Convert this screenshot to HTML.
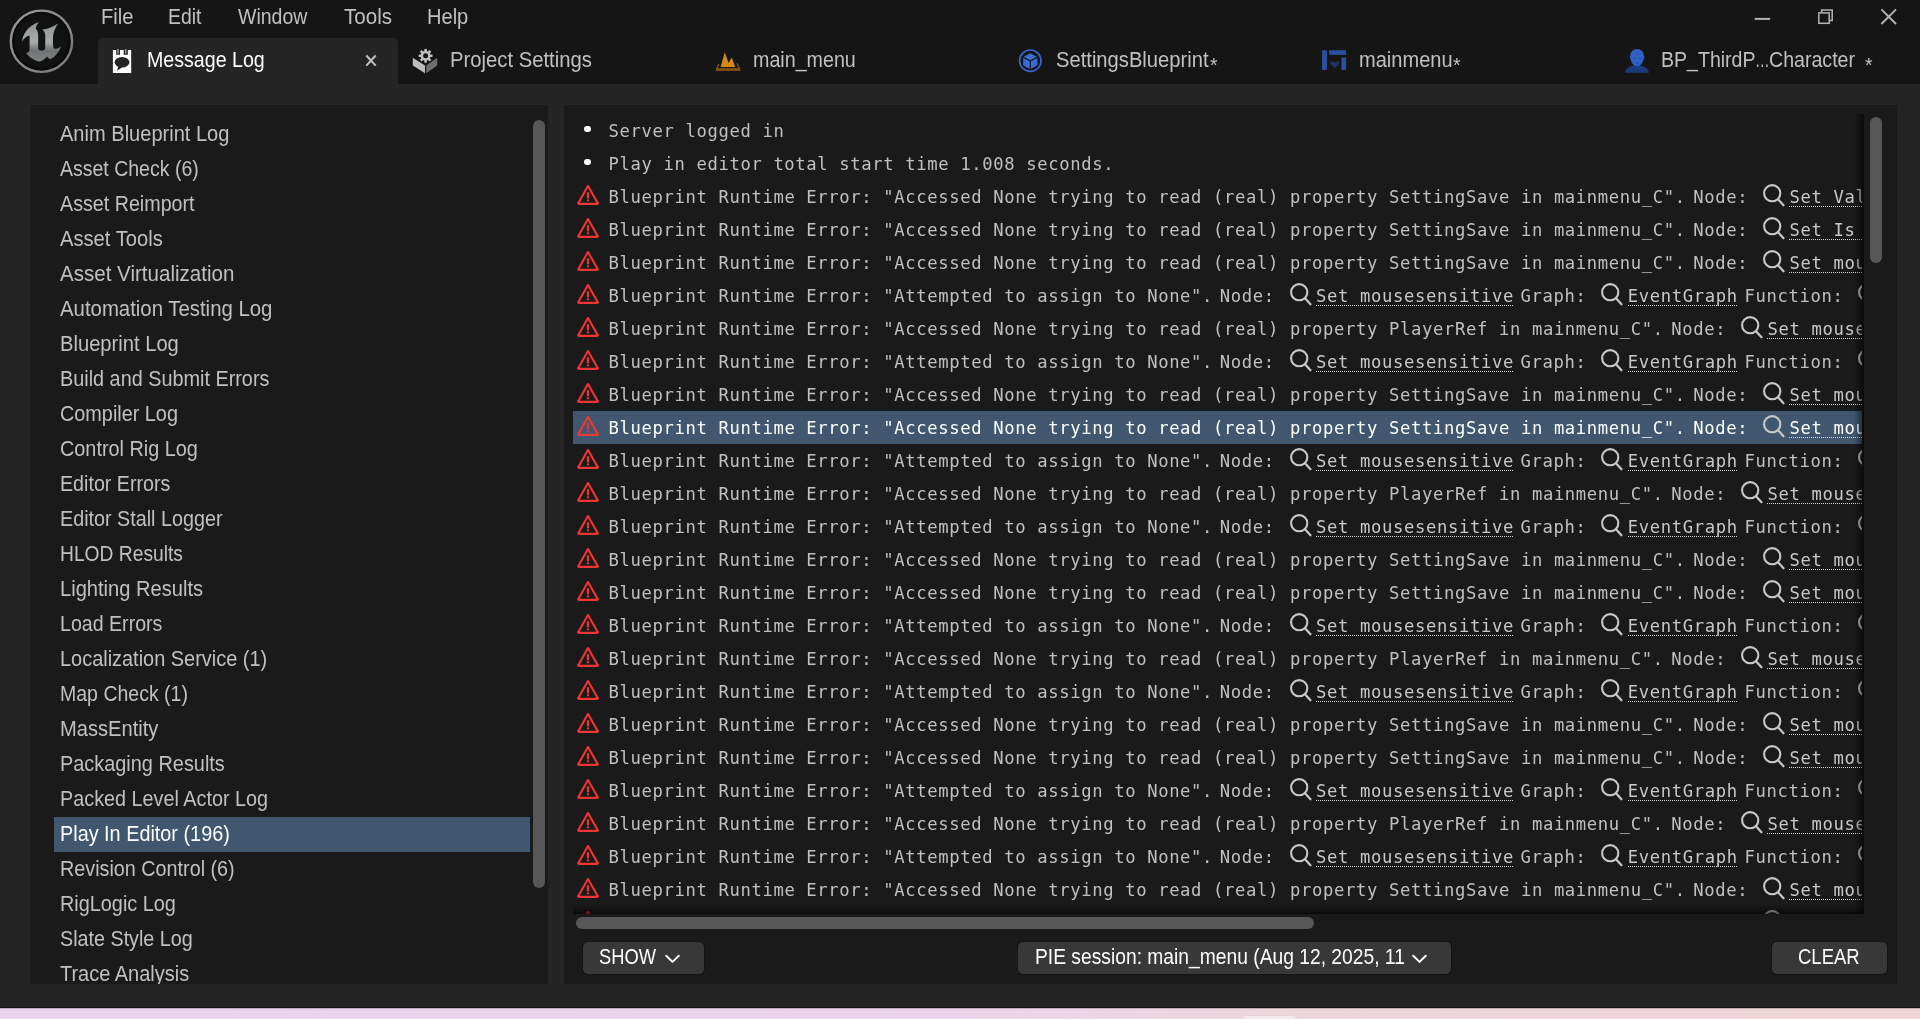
<!DOCTYPE html>
<html lang="en"><head><meta charset="utf-8"><title>Message Log</title>
<style>
*{box-sizing:border-box;margin:0;padding:0}
html,body{width:1920px;height:1019px;overflow:hidden;background:#242424}
body{font-family:"Liberation Sans",sans-serif;font-size:22px;color:#c0c0c0;position:relative}
#win{will-change:transform;position:absolute;left:0;top:0;width:1920px;height:1008px;background:#242424;overflow:hidden}
#tb{position:absolute;left:0;top:0;width:1920px;height:84px;background:#151515}
#tb .m{position:absolute;top:0;height:34px;line-height:34px;white-space:nowrap}
#tab{position:absolute;left:98px;top:38px;width:300px;height:46px;background:#242424;border-radius:5px 5px 0 0}
.tt{position:absolute;top:38px;height:46px;line-height:44px;white-space:nowrap}
.st{top:42.5px;font-size:19.5px}
#tb svg{position:absolute}
#left{position:absolute;left:30px;top:105px;width:518px;height:879px;background:#1a1a1a;overflow:hidden}
.li{position:absolute;left:24px;width:476px;height:35px;line-height:34px;padding-left:6.4px;white-space:nowrap}
.li.sel{background:#40576f;color:#fff}
.thumb{position:absolute;background:#575757;border-radius:6px}
#right{position:absolute;left:564px;top:105px;width:1333px;height:879px;background:#1a1a1a;overflow:hidden}
#view{position:absolute;left:9px;top:9px;width:1291px;height:800px;overflow:hidden}
#clip{position:absolute;left:0;top:0;width:1289px;height:800px;overflow:hidden}
.row{position:absolute;left:0;width:3000px;height:33px;white-space:nowrap;display:flex;align-items:flex-start;
 font-family:"DejaVu Sans Mono","Liberation Mono",monospace;font-size:17.2px;letter-spacing:0.645px;line-height:33px;color:#c0c0c0}
.row.sel{background:#40576f;color:#fff}
.row .warn{flex:none;margin:4px 0 0 2.5px}
.row .dot{flex:none;width:6.8px;height:6.8px;border-radius:50%;background:#fff;margin:11.5px 0 0 11.4px}
.row .warn + .t{margin-left:9px}
.row .dot + .t{margin-left:17.3px}
.row .t{flex:none;position:relative;top:1px}
.row .g{margin-left:6.7px}
.row.a .g{margin-left:7.4px}
.row .mag{flex:none;margin:3.4px 3.4px 0 13.9px}
.row .lk{flex:none;position:relative;top:1px;color:#c8c8c8;
 background:repeating-linear-gradient(90deg,#d8d8d8 0,#d8d8d8 1px,transparent 1px,transparent 2px) 0 25px/100% 1.4px no-repeat}
.row.sel .lk{color:#fff}
.shr{position:absolute;right:0;top:0;width:10px;height:800px;background:linear-gradient(90deg,rgba(0,0,0,0),rgba(0,0,0,.28) 50%,rgba(0,0,0,.6))}
.shb{position:absolute;left:0;bottom:0;width:1291px;height:10px;background:linear-gradient(180deg,rgba(0,0,0,0),rgba(0,0,0,.28) 50%,rgba(0,0,0,.6))}
.btn{position:absolute;top:837px;height:32px;background:#383838;border-radius:5px;box-shadow:0 0 0 1px #141414;color:#fff;line-height:30px;white-space:nowrap}
.btn span{display:inline-block}
.chev{position:absolute;top:12px}
#strip{position:absolute;left:0;top:1008px;width:1920px;height:11px;background:linear-gradient(90deg,#e9d3ee 0%,#ecd5ea 50%,#eed6dd 66%,#f0d4d8 100%)}
#strip b{position:absolute;left:0;top:0;width:1920px;height:1px;background:rgba(70,60,70,.28)}
#winb{position:absolute;left:0;top:1007px;width:1920px;height:1px;background:#121212}
#strip i{position:absolute;left:1241px;top:7px;width:56px;height:8px;border-radius:4px 4px 0 0;background:#f6eaee;border:1px solid #e7d1d8}

</style></head>
<body>
<div id="win">
<div id="tb">
<svg style="left:0;top:0" width="100" height="90" viewBox="0 0 1132 1019">
<defs>
<linearGradient id="lgU" x1="0" y1="250" x2="0" y2="700" gradientUnits="userSpaceOnUse"><stop offset="0" stop-color="#8f9393"/><stop offset=".5" stop-color="#a9acac"/><stop offset=".72" stop-color="#6f7373"/><stop offset="1" stop-color="#7f8383"/></linearGradient>
<linearGradient id="lgR" x1="150" y1="120" x2="780" y2="820" gradientUnits="userSpaceOnUse"><stop offset="0" stop-color="#9a9a9a"/><stop offset=".5" stop-color="#8a8a8a"/><stop offset="1" stop-color="#767a7a"/></linearGradient>
<radialGradient id="rgI" cx="469" cy="467" r="340" gradientUnits="userSpaceOnUse"><stop offset="0" stop-color="#141414"/><stop offset=".85" stop-color="#111"/><stop offset="1" stop-color="#060606"/></radialGradient>
</defs>
<circle cx="469" cy="467" r="347" fill="url(#rgI)" stroke="url(#lgR)" stroke-width="27"/>
<path fill="url(#lgU)" d="M440 252 C400 260 340 295 300 345 C270 385 252 430 250 470 C268 438 295 410 335 402 L335 562 C335 585 318 598 295 600 C335 655 395 690 452 697 C485 690 510 665 530 640 L565 672 C615 650 670 590 692 520 C668 548 640 560 607 545 C598 500 596 420 606 378 C618 330 640 292 660 270 C610 292 555 330 478 335 C503 355 512 375 512 405 L512 555 C495 578 452 580 432 558 L432 400 C432 365 425 340 405 325 C408 300 420 272 440 252 Z"/>
</svg>
<div class="m" style="left:101px"><span style="display:inline-block;transform-origin:0 50%;transform:scaleX(0.9174);">File</span></div>
<div class="m" style="left:168px"><span style="display:inline-block;transform-origin:0 50%;transform:scaleX(0.8816);">Edit</span></div>
<div class="m" style="left:238px"><span style="display:inline-block;transform-origin:0 50%;transform:scaleX(0.8873);">Window</span></div>
<div class="m" style="left:344px"><span style="display:inline-block;transform-origin:0 50%;transform:scaleX(0.9348);">Tools</span></div>
<div class="m" style="left:427px"><span style="display:inline-block;transform-origin:0 50%;transform:scaleX(0.9117);">Help</span></div>
<!-- window controls -->
<svg style="left:1750px;top:5px" width="150" height="26" viewBox="0 0 150 26" fill="none" stroke="#b4b4b4">
<path d="M4.7 13.9 H20.1" stroke-width="2"/>
<path d="M71.6 7.1 V4.9 H82.2 V15.6 H79.8" stroke-width="1.5"/>
<rect x="68.8" y="7.9" width="10.4" height="10.4" stroke-width="1.5"/>
<path d="M131.4 4.4 L146 19 M146 4.4 L131.4 19" stroke-width="1.9"/>
</svg>
<!-- active tab -->
<div id="tab"></div>
<svg style="left:112px;top:49px" width="20" height="25" viewBox="0 0 20 25">
<path fill="#fff" d="M0.9 0.9 H4.2 V5.7 H8 V0.9 H11.7 V5.7 H15.8 V0.9 H19.2 V24 H0.9 Z"/>
<rect x="5.3" y="0" width="1.5" height="4.7" fill="#9c9c9c"/><rect x="12.9" y="0" width="1.5" height="4.7" fill="#9c9c9c"/>
<ellipse cx="10" cy="13.2" rx="7.4" ry="5.25" fill="#242424"/>
<path fill="#242424" d="M6.4 17.2 L5 21.8 L10.6 18 Z"/>
</svg>
<div class="tt" style="left:147px;color:#fff"><span style="display:inline-block;transform-origin:0 50%;transform:scaleX(0.8912);">Message Log</span></div>
<svg style="left:364px;top:53px" width="14" height="15" viewBox="0 0 14 15"><path d="M2.3 2.5 L11.7 12.6 M11.7 2.5 L2.3 12.6" stroke="#c0c0c0" stroke-width="2.1" fill="none"/></svg>
<!-- project settings -->
<svg style="left:411px;top:47px" width="28" height="28" viewBox="0 0 28 28">
<path fill="#bdbdbd" d="M1.8 10.8 L14 18.6 V26.2 L1.8 18.6 Z"/>
<path fill="#6f6f6f" d="M15.2 18.6 L26.2 10.8 V18.6 L15.2 26.2 Z"/>
<g fill="#c0c0c0"><circle cx="14.6" cy="8.8" r="4.9"/>
<rect x="13.35" y="1.9" width="2.5" height="13.8"/>
<rect x="13.35" y="1.9" width="2.5" height="13.8" transform="rotate(45 14.6 8.8)"/>
<rect x="13.35" y="1.9" width="2.5" height="13.8" transform="rotate(90 14.6 8.8)"/>
<rect x="13.35" y="1.9" width="2.5" height="13.8" transform="rotate(135 14.6 8.8)"/></g>
<circle cx="14.6" cy="8.8" r="2.5" fill="#151515"/>
</svg>
<div class="tt" style="left:450px"><span style="display:inline-block;transform-origin:0 50%;transform:scaleX(0.9207);">Project Settings</span></div>
<!-- main_menu -->
<svg style="left:714px;top:50px" width="28" height="24" viewBox="0 0 28 24">
<path fill="#7c4e0f" d="M1.9 21.1 H26.3 V18.6 L23.4 13 L22.3 13.6 L24.4 18 H3.8 L5.6 14.2 L4.5 13.6 L1.9 18.6 Z"/>
<path fill="#d58a14" d="M6.6 16.9 L10.8 2.3 L14.6 13 L17.7 7.5 L21.2 16.9 Z"/>
</svg>
<div class="tt" style="left:753px"><span style="display:inline-block;transform-origin:0 50%;transform:scaleX(0.8941);">main_menu</span></div>
<!-- SettingsBlueprint -->
<svg style="left:1017px;top:48px" width="27" height="26" viewBox="0 0 27 26">
<circle cx="13.3" cy="12.7" r="10.7" fill="none" stroke="#3866cd" stroke-width="1.7"/>
<path fill="#3b6bd8" d="M13.3 5.2 L19.9 8.7 L13.3 12.2 L6.7 8.7 Z"/>
<path fill="#3b6bd8" d="M6.2 9.9 L12.7 13.3 V21 L6.2 17.3 Z"/>
<path fill="#3b6bd8" d="M20.4 9.9 L13.9 13.3 V21 L20.4 17.3 Z"/>
</svg>
<div class="tt" style="left:1056px"><span style="display:inline-block;transform-origin:0 50%;transform:scaleX(0.9171);">SettingsBlueprint</span></div>
<div class="tt st" style="left:1210px">*</div>
<!-- mainmenu widget -->
<svg style="left:1320px;top:48px" width="28" height="24" viewBox="0 0 28 24">
<rect x="2" y="2.2" width="4.9" height="19.7" fill="#2a4f9e"/>
<rect x="9.2" y="2.2" width="16.9" height="4.7" fill="#2a4f9e"/>
<rect x="21.4" y="9.5" width="4.7" height="12.4" fill="#2a4f9e"/>
<path fill="#1c3362" d="M14.8 20.3 L10.6 16.3 C9.4 14.9 10.6 13 12.3 13.2 C13.4 13.3 14.3 14 14.8 15 C15.3 14 16.2 13.3 17.3 13.2 C19 13 20.2 14.9 19 16.3 Z"/>
</svg>
<div class="tt" style="left:1359px"><span style="display:inline-block;transform-origin:0 50%;transform:scaleX(0.9116);">mainmenu</span></div>
<div class="tt st" style="left:1453px">*</div>
<!-- BP character -->
<svg style="left:1623px;top:47px" width="28" height="27" viewBox="0 0 28 27">
<path fill="#1d3a7c" d="M2.1 25.8 C3 21.5 6 19.6 9.8 18.8 L18.2 18.8 C22 19.6 25 21.5 26 25.8 Z"/>
<path fill="#2f60c6" d="M14.1 1.9 C18.2 1.9 20.9 5 20.9 9 C21.6 9.3 21.6 11.6 20.5 12.2 C20 15.6 17.6 19.3 14.1 19.3 C10.6 19.3 8.2 15.6 7.7 12.2 C6.6 11.6 6.6 9.3 7.3 9 C7.3 5 10 1.9 14.1 1.9 Z"/>
<path d="M10.4 11.2 H12.6 M15.6 11.2 H17.8 M12.8 15.8 H15.4" stroke="#234a9c" stroke-width="0.9" fill="none"/>
</svg>
<div class="tt" style="left:1661.4px"><span style="display:inline-block;transform-origin:0 50%;transform:scaleX(0.8885);">BP_ThirdP</span></div><div class="tt" style="left:1755.3px"><span style="display:inline-block;transform-origin:0 50%;transform:scaleX(0.6625);">…</span></div><div class="tt" style="left:1768.9px"><span style="display:inline-block;transform-origin:0 50%;transform:scaleX(0.8903);">Character</span></div>
<div class="tt st" style="left:1865px">*</div>
</div>

<div id="left">
<div class="li" style="top:12px"><span style="display:inline-block;transform-origin:0 50%;transform:scaleX(0.9114);">Anim Blueprint Log</span></div>
<div class="li" style="top:47px"><span style="display:inline-block;transform-origin:0 50%;transform:scaleX(0.8864);">Asset Check (6)</span></div>
<div class="li" style="top:82px"><span style="display:inline-block;transform-origin:0 50%;transform:scaleX(0.8947);">Asset Reimport</span></div>
<div class="li" style="top:117px"><span style="display:inline-block;transform-origin:0 50%;transform:scaleX(0.9165);">Asset Tools</span></div>
<div class="li" style="top:152px"><span style="display:inline-block;transform-origin:0 50%;transform:scaleX(0.9342);">Asset Virtualization</span></div>
<div class="li" style="top:187px"><span style="display:inline-block;transform-origin:0 50%;transform:scaleX(0.9254);">Automation Testing Log</span></div>
<div class="li" style="top:222px"><span style="display:inline-block;transform-origin:0 50%;transform:scaleX(0.9166);">Blueprint Log</span></div>
<div class="li" style="top:257px"><span style="display:inline-block;transform-origin:0 50%;transform:scaleX(0.9014);">Build and Submit Errors</span></div>
<div class="li" style="top:292px"><span style="display:inline-block;transform-origin:0 50%;transform:scaleX(0.9013);">Compiler Log</span></div>
<div class="li" style="top:327px"><span style="display:inline-block;transform-origin:0 50%;transform:scaleX(0.9015);">Control Rig Log</span></div>
<div class="li" style="top:362px"><span style="display:inline-block;transform-origin:0 50%;transform:scaleX(0.8937);">Editor Errors</span></div>
<div class="li" style="top:397px"><span style="display:inline-block;transform-origin:0 50%;transform:scaleX(0.8977);">Editor Stall Logger</span></div>
<div class="li" style="top:432px"><span style="display:inline-block;transform-origin:0 50%;transform:scaleX(0.8748);">HLOD Results</span></div>
<div class="li" style="top:467px"><span style="display:inline-block;transform-origin:0 50%;transform:scaleX(0.9142);">Lighting Results</span></div>
<div class="li" style="top:502px"><span style="display:inline-block;transform-origin:0 50%;transform:scaleX(0.8908);">Load Errors</span></div>
<div class="li" style="top:537px"><span style="display:inline-block;transform-origin:0 50%;transform:scaleX(0.9057);">Localization Service (1)</span></div>
<div class="li" style="top:572px"><span style="display:inline-block;transform-origin:0 50%;transform:scaleX(0.8870);">Map Check (1)</span></div>
<div class="li" style="top:607px"><span style="display:inline-block;transform-origin:0 50%;transform:scaleX(0.9142);">MassEntity</span></div>
<div class="li" style="top:642px"><span style="display:inline-block;transform-origin:0 50%;transform:scaleX(0.9045);">Packaging Results</span></div>
<div class="li" style="top:677px"><span style="display:inline-block;transform-origin:0 50%;transform:scaleX(0.9004);">Packed Level Actor Log</span></div>
<div class="li sel" style="top:712px"><span style="display:inline-block;transform-origin:0 50%;transform:scaleX(0.9017);">Play In Editor (196)</span></div>
<div class="li" style="top:747px"><span style="display:inline-block;transform-origin:0 50%;transform:scaleX(0.8986);">Revision Control (6)</span></div>
<div class="li" style="top:782px"><span style="display:inline-block;transform-origin:0 50%;transform:scaleX(0.9020);">RigLogic Log</span></div>
<div class="li" style="top:817px"><span style="display:inline-block;transform-origin:0 50%;transform:scaleX(0.8971);">Slate Style Log</span></div>
<div class="li" style="top:852px"><span style="display:inline-block;transform-origin:0 50%;transform:scaleX(0.9078);">Trace Analysis</span></div>
<div class="thumb" style="left:503px;top:15px;width:12px;height:768px"></div>
</div>
<div id="right">
<div id="view">
<div id="clip">
<div style="top:0px" class="row"><i class="dot"></i><span class="t">Server logged in</span></div>
<div style="top:33px" class="row"><i class="dot"></i><span class="t">Play in editor total start time 1.008 seconds.</span></div>
<div style="top:66px" class="row a"><svg class="warn" width="24" height="22" viewBox="0 0 24 22"><path d="M11 3.84 Q12 0.4 13 3.84 L21.2 18.16 Q23 19.9 20.2 19.9 L3.8 19.9 Q1 19.9 2.8 18.16 Z" fill="none" stroke="#ef3535" stroke-width="2.1" stroke-linejoin="round"/><path d="M12 8.2 V14.4" stroke="#ef3535" stroke-width="2.2" fill="none"/><rect x="10.9" y="15.3" width="2.2" height="1.9" fill="#ef3535"/></svg><span class="t">Blueprint Runtime Error: &quot;Accessed None trying to read (real) property SettingSave in mainmenu_C&quot;.</span><span class="t g">Node:</span><svg class="mag" width="24" height="26" viewBox="0 0 24 26"><circle cx="10.2" cy="10.2" r="8.1" fill="none" stroke="#c8c8c8" stroke-width="2.1"/><path d="M16 16.2 L21.5 22.3" stroke="#c8c8c8" stroke-width="2.2" stroke-linecap="round" fill="none"/></svg><span class="lk">Set Value</span></div>
<div style="top:99px" class="row a"><svg class="warn" width="24" height="22" viewBox="0 0 24 22"><path d="M11 3.84 Q12 0.4 13 3.84 L21.2 18.16 Q23 19.9 20.2 19.9 L3.8 19.9 Q1 19.9 2.8 18.16 Z" fill="none" stroke="#ef3535" stroke-width="2.1" stroke-linejoin="round"/><path d="M12 8.2 V14.4" stroke="#ef3535" stroke-width="2.2" fill="none"/><rect x="10.9" y="15.3" width="2.2" height="1.9" fill="#ef3535"/></svg><span class="t">Blueprint Runtime Error: &quot;Accessed None trying to read (real) property SettingSave in mainmenu_C&quot;.</span><span class="t g">Node:</span><svg class="mag" width="24" height="26" viewBox="0 0 24 26"><circle cx="10.2" cy="10.2" r="8.1" fill="none" stroke="#c8c8c8" stroke-width="2.1"/><path d="M16 16.2 L21.5 22.3" stroke="#c8c8c8" stroke-width="2.2" stroke-linecap="round" fill="none"/></svg><span class="lk">Set Is Checked</span></div>
<div style="top:132px" class="row a"><svg class="warn" width="24" height="22" viewBox="0 0 24 22"><path d="M11 3.84 Q12 0.4 13 3.84 L21.2 18.16 Q23 19.9 20.2 19.9 L3.8 19.9 Q1 19.9 2.8 18.16 Z" fill="none" stroke="#ef3535" stroke-width="2.1" stroke-linejoin="round"/><path d="M12 8.2 V14.4" stroke="#ef3535" stroke-width="2.2" fill="none"/><rect x="10.9" y="15.3" width="2.2" height="1.9" fill="#ef3535"/></svg><span class="t">Blueprint Runtime Error: &quot;Accessed None trying to read (real) property SettingSave in mainmenu_C&quot;.</span><span class="t g">Node:</span><svg class="mag" width="24" height="26" viewBox="0 0 24 26"><circle cx="10.2" cy="10.2" r="8.1" fill="none" stroke="#c8c8c8" stroke-width="2.1"/><path d="M16 16.2 L21.5 22.3" stroke="#c8c8c8" stroke-width="2.2" stroke-linecap="round" fill="none"/></svg><span class="lk">Set mousesensitive</span></div>
<div style="top:165px" class="row"><svg class="warn" width="24" height="22" viewBox="0 0 24 22"><path d="M11 3.84 Q12 0.4 13 3.84 L21.2 18.16 Q23 19.9 20.2 19.9 L3.8 19.9 Q1 19.9 2.8 18.16 Z" fill="none" stroke="#ef3535" stroke-width="2.1" stroke-linejoin="round"/><path d="M12 8.2 V14.4" stroke="#ef3535" stroke-width="2.2" fill="none"/><rect x="10.9" y="15.3" width="2.2" height="1.9" fill="#ef3535"/></svg><span class="t">Blueprint Runtime Error: &quot;Attempted to assign to None&quot;.</span><span class="t g">Node:</span><svg class="mag" width="24" height="26" viewBox="0 0 24 26"><circle cx="10.2" cy="10.2" r="8.1" fill="none" stroke="#c8c8c8" stroke-width="2.1"/><path d="M16 16.2 L21.5 22.3" stroke="#c8c8c8" stroke-width="2.2" stroke-linecap="round" fill="none"/></svg><span class="lk">Set mousesensitive</span><span class="t g">Graph:</span><svg class="mag" width="24" height="26" viewBox="0 0 24 26"><circle cx="10.2" cy="10.2" r="8.1" fill="none" stroke="#c8c8c8" stroke-width="2.1"/><path d="M16 16.2 L21.5 22.3" stroke="#c8c8c8" stroke-width="2.2" stroke-linecap="round" fill="none"/></svg><span class="lk">EventGraph</span><span class="t g">Function:</span><svg class="mag" width="24" height="26" viewBox="0 0 24 26"><circle cx="10.2" cy="10.2" r="8.1" fill="none" stroke="#c8c8c8" stroke-width="2.1"/><path d="M16 16.2 L21.5 22.3" stroke="#c8c8c8" stroke-width="2.2" stroke-linecap="round" fill="none"/></svg><span class="lk">Execute Ubergraph mainmenu</span></div>
<div style="top:198px" class="row a"><svg class="warn" width="24" height="22" viewBox="0 0 24 22"><path d="M11 3.84 Q12 0.4 13 3.84 L21.2 18.16 Q23 19.9 20.2 19.9 L3.8 19.9 Q1 19.9 2.8 18.16 Z" fill="none" stroke="#ef3535" stroke-width="2.1" stroke-linejoin="round"/><path d="M12 8.2 V14.4" stroke="#ef3535" stroke-width="2.2" fill="none"/><rect x="10.9" y="15.3" width="2.2" height="1.9" fill="#ef3535"/></svg><span class="t">Blueprint Runtime Error: &quot;Accessed None trying to read (real) property PlayerRef in mainmenu_C&quot;.</span><span class="t g">Node:</span><svg class="mag" width="24" height="26" viewBox="0 0 24 26"><circle cx="10.2" cy="10.2" r="8.1" fill="none" stroke="#c8c8c8" stroke-width="2.1"/><path d="M16 16.2 L21.5 22.3" stroke="#c8c8c8" stroke-width="2.2" stroke-linecap="round" fill="none"/></svg><span class="lk">Set mousesensitive</span></div>
<div style="top:231px" class="row"><svg class="warn" width="24" height="22" viewBox="0 0 24 22"><path d="M11 3.84 Q12 0.4 13 3.84 L21.2 18.16 Q23 19.9 20.2 19.9 L3.8 19.9 Q1 19.9 2.8 18.16 Z" fill="none" stroke="#ef3535" stroke-width="2.1" stroke-linejoin="round"/><path d="M12 8.2 V14.4" stroke="#ef3535" stroke-width="2.2" fill="none"/><rect x="10.9" y="15.3" width="2.2" height="1.9" fill="#ef3535"/></svg><span class="t">Blueprint Runtime Error: &quot;Attempted to assign to None&quot;.</span><span class="t g">Node:</span><svg class="mag" width="24" height="26" viewBox="0 0 24 26"><circle cx="10.2" cy="10.2" r="8.1" fill="none" stroke="#c8c8c8" stroke-width="2.1"/><path d="M16 16.2 L21.5 22.3" stroke="#c8c8c8" stroke-width="2.2" stroke-linecap="round" fill="none"/></svg><span class="lk">Set mousesensitive</span><span class="t g">Graph:</span><svg class="mag" width="24" height="26" viewBox="0 0 24 26"><circle cx="10.2" cy="10.2" r="8.1" fill="none" stroke="#c8c8c8" stroke-width="2.1"/><path d="M16 16.2 L21.5 22.3" stroke="#c8c8c8" stroke-width="2.2" stroke-linecap="round" fill="none"/></svg><span class="lk">EventGraph</span><span class="t g">Function:</span><svg class="mag" width="24" height="26" viewBox="0 0 24 26"><circle cx="10.2" cy="10.2" r="8.1" fill="none" stroke="#c8c8c8" stroke-width="2.1"/><path d="M16 16.2 L21.5 22.3" stroke="#c8c8c8" stroke-width="2.2" stroke-linecap="round" fill="none"/></svg><span class="lk">Execute Ubergraph mainmenu</span></div>
<div style="top:264px" class="row a"><svg class="warn" width="24" height="22" viewBox="0 0 24 22"><path d="M11 3.84 Q12 0.4 13 3.84 L21.2 18.16 Q23 19.9 20.2 19.9 L3.8 19.9 Q1 19.9 2.8 18.16 Z" fill="none" stroke="#ef3535" stroke-width="2.1" stroke-linejoin="round"/><path d="M12 8.2 V14.4" stroke="#ef3535" stroke-width="2.2" fill="none"/><rect x="10.9" y="15.3" width="2.2" height="1.9" fill="#ef3535"/></svg><span class="t">Blueprint Runtime Error: &quot;Accessed None trying to read (real) property SettingSave in mainmenu_C&quot;.</span><span class="t g">Node:</span><svg class="mag" width="24" height="26" viewBox="0 0 24 26"><circle cx="10.2" cy="10.2" r="8.1" fill="none" stroke="#c8c8c8" stroke-width="2.1"/><path d="M16 16.2 L21.5 22.3" stroke="#c8c8c8" stroke-width="2.2" stroke-linecap="round" fill="none"/></svg><span class="lk">Set mousesensitive</span></div>
<div style="top:297px" class="row a sel"><svg class="warn" width="24" height="22" viewBox="0 0 24 22"><path d="M11 3.84 Q12 0.4 13 3.84 L21.2 18.16 Q23 19.9 20.2 19.9 L3.8 19.9 Q1 19.9 2.8 18.16 Z" fill="none" stroke="#ef3535" stroke-width="2.1" stroke-linejoin="round"/><path d="M12 8.2 V14.4" stroke="#ef3535" stroke-width="2.2" fill="none"/><rect x="10.9" y="15.3" width="2.2" height="1.9" fill="#ef3535"/></svg><span class="t">Blueprint Runtime Error: &quot;Accessed None trying to read (real) property SettingSave in mainmenu_C&quot;.</span><span class="t g">Node:</span><svg class="mag" width="24" height="26" viewBox="0 0 24 26"><circle cx="10.2" cy="10.2" r="8.1" fill="none" stroke="#c8c8c8" stroke-width="2.1"/><path d="M16 16.2 L21.5 22.3" stroke="#c8c8c8" stroke-width="2.2" stroke-linecap="round" fill="none"/></svg><span class="lk">Set mousesensitive</span></div>
<div style="top:330px" class="row"><svg class="warn" width="24" height="22" viewBox="0 0 24 22"><path d="M11 3.84 Q12 0.4 13 3.84 L21.2 18.16 Q23 19.9 20.2 19.9 L3.8 19.9 Q1 19.9 2.8 18.16 Z" fill="none" stroke="#ef3535" stroke-width="2.1" stroke-linejoin="round"/><path d="M12 8.2 V14.4" stroke="#ef3535" stroke-width="2.2" fill="none"/><rect x="10.9" y="15.3" width="2.2" height="1.9" fill="#ef3535"/></svg><span class="t">Blueprint Runtime Error: &quot;Attempted to assign to None&quot;.</span><span class="t g">Node:</span><svg class="mag" width="24" height="26" viewBox="0 0 24 26"><circle cx="10.2" cy="10.2" r="8.1" fill="none" stroke="#c8c8c8" stroke-width="2.1"/><path d="M16 16.2 L21.5 22.3" stroke="#c8c8c8" stroke-width="2.2" stroke-linecap="round" fill="none"/></svg><span class="lk">Set mousesensitive</span><span class="t g">Graph:</span><svg class="mag" width="24" height="26" viewBox="0 0 24 26"><circle cx="10.2" cy="10.2" r="8.1" fill="none" stroke="#c8c8c8" stroke-width="2.1"/><path d="M16 16.2 L21.5 22.3" stroke="#c8c8c8" stroke-width="2.2" stroke-linecap="round" fill="none"/></svg><span class="lk">EventGraph</span><span class="t g">Function:</span><svg class="mag" width="24" height="26" viewBox="0 0 24 26"><circle cx="10.2" cy="10.2" r="8.1" fill="none" stroke="#c8c8c8" stroke-width="2.1"/><path d="M16 16.2 L21.5 22.3" stroke="#c8c8c8" stroke-width="2.2" stroke-linecap="round" fill="none"/></svg><span class="lk">Execute Ubergraph mainmenu</span></div>
<div style="top:363px" class="row a"><svg class="warn" width="24" height="22" viewBox="0 0 24 22"><path d="M11 3.84 Q12 0.4 13 3.84 L21.2 18.16 Q23 19.9 20.2 19.9 L3.8 19.9 Q1 19.9 2.8 18.16 Z" fill="none" stroke="#ef3535" stroke-width="2.1" stroke-linejoin="round"/><path d="M12 8.2 V14.4" stroke="#ef3535" stroke-width="2.2" fill="none"/><rect x="10.9" y="15.3" width="2.2" height="1.9" fill="#ef3535"/></svg><span class="t">Blueprint Runtime Error: &quot;Accessed None trying to read (real) property PlayerRef in mainmenu_C&quot;.</span><span class="t g">Node:</span><svg class="mag" width="24" height="26" viewBox="0 0 24 26"><circle cx="10.2" cy="10.2" r="8.1" fill="none" stroke="#c8c8c8" stroke-width="2.1"/><path d="M16 16.2 L21.5 22.3" stroke="#c8c8c8" stroke-width="2.2" stroke-linecap="round" fill="none"/></svg><span class="lk">Set mousesensitive</span></div>
<div style="top:396px" class="row"><svg class="warn" width="24" height="22" viewBox="0 0 24 22"><path d="M11 3.84 Q12 0.4 13 3.84 L21.2 18.16 Q23 19.9 20.2 19.9 L3.8 19.9 Q1 19.9 2.8 18.16 Z" fill="none" stroke="#ef3535" stroke-width="2.1" stroke-linejoin="round"/><path d="M12 8.2 V14.4" stroke="#ef3535" stroke-width="2.2" fill="none"/><rect x="10.9" y="15.3" width="2.2" height="1.9" fill="#ef3535"/></svg><span class="t">Blueprint Runtime Error: &quot;Attempted to assign to None&quot;.</span><span class="t g">Node:</span><svg class="mag" width="24" height="26" viewBox="0 0 24 26"><circle cx="10.2" cy="10.2" r="8.1" fill="none" stroke="#c8c8c8" stroke-width="2.1"/><path d="M16 16.2 L21.5 22.3" stroke="#c8c8c8" stroke-width="2.2" stroke-linecap="round" fill="none"/></svg><span class="lk">Set mousesensitive</span><span class="t g">Graph:</span><svg class="mag" width="24" height="26" viewBox="0 0 24 26"><circle cx="10.2" cy="10.2" r="8.1" fill="none" stroke="#c8c8c8" stroke-width="2.1"/><path d="M16 16.2 L21.5 22.3" stroke="#c8c8c8" stroke-width="2.2" stroke-linecap="round" fill="none"/></svg><span class="lk">EventGraph</span><span class="t g">Function:</span><svg class="mag" width="24" height="26" viewBox="0 0 24 26"><circle cx="10.2" cy="10.2" r="8.1" fill="none" stroke="#c8c8c8" stroke-width="2.1"/><path d="M16 16.2 L21.5 22.3" stroke="#c8c8c8" stroke-width="2.2" stroke-linecap="round" fill="none"/></svg><span class="lk">Execute Ubergraph mainmenu</span></div>
<div style="top:429px" class="row a"><svg class="warn" width="24" height="22" viewBox="0 0 24 22"><path d="M11 3.84 Q12 0.4 13 3.84 L21.2 18.16 Q23 19.9 20.2 19.9 L3.8 19.9 Q1 19.9 2.8 18.16 Z" fill="none" stroke="#ef3535" stroke-width="2.1" stroke-linejoin="round"/><path d="M12 8.2 V14.4" stroke="#ef3535" stroke-width="2.2" fill="none"/><rect x="10.9" y="15.3" width="2.2" height="1.9" fill="#ef3535"/></svg><span class="t">Blueprint Runtime Error: &quot;Accessed None trying to read (real) property SettingSave in mainmenu_C&quot;.</span><span class="t g">Node:</span><svg class="mag" width="24" height="26" viewBox="0 0 24 26"><circle cx="10.2" cy="10.2" r="8.1" fill="none" stroke="#c8c8c8" stroke-width="2.1"/><path d="M16 16.2 L21.5 22.3" stroke="#c8c8c8" stroke-width="2.2" stroke-linecap="round" fill="none"/></svg><span class="lk">Set mousesensitive</span></div>
<div style="top:462px" class="row a"><svg class="warn" width="24" height="22" viewBox="0 0 24 22"><path d="M11 3.84 Q12 0.4 13 3.84 L21.2 18.16 Q23 19.9 20.2 19.9 L3.8 19.9 Q1 19.9 2.8 18.16 Z" fill="none" stroke="#ef3535" stroke-width="2.1" stroke-linejoin="round"/><path d="M12 8.2 V14.4" stroke="#ef3535" stroke-width="2.2" fill="none"/><rect x="10.9" y="15.3" width="2.2" height="1.9" fill="#ef3535"/></svg><span class="t">Blueprint Runtime Error: &quot;Accessed None trying to read (real) property SettingSave in mainmenu_C&quot;.</span><span class="t g">Node:</span><svg class="mag" width="24" height="26" viewBox="0 0 24 26"><circle cx="10.2" cy="10.2" r="8.1" fill="none" stroke="#c8c8c8" stroke-width="2.1"/><path d="M16 16.2 L21.5 22.3" stroke="#c8c8c8" stroke-width="2.2" stroke-linecap="round" fill="none"/></svg><span class="lk">Set mousesensitive</span></div>
<div style="top:495px" class="row"><svg class="warn" width="24" height="22" viewBox="0 0 24 22"><path d="M11 3.84 Q12 0.4 13 3.84 L21.2 18.16 Q23 19.9 20.2 19.9 L3.8 19.9 Q1 19.9 2.8 18.16 Z" fill="none" stroke="#ef3535" stroke-width="2.1" stroke-linejoin="round"/><path d="M12 8.2 V14.4" stroke="#ef3535" stroke-width="2.2" fill="none"/><rect x="10.9" y="15.3" width="2.2" height="1.9" fill="#ef3535"/></svg><span class="t">Blueprint Runtime Error: &quot;Attempted to assign to None&quot;.</span><span class="t g">Node:</span><svg class="mag" width="24" height="26" viewBox="0 0 24 26"><circle cx="10.2" cy="10.2" r="8.1" fill="none" stroke="#c8c8c8" stroke-width="2.1"/><path d="M16 16.2 L21.5 22.3" stroke="#c8c8c8" stroke-width="2.2" stroke-linecap="round" fill="none"/></svg><span class="lk">Set mousesensitive</span><span class="t g">Graph:</span><svg class="mag" width="24" height="26" viewBox="0 0 24 26"><circle cx="10.2" cy="10.2" r="8.1" fill="none" stroke="#c8c8c8" stroke-width="2.1"/><path d="M16 16.2 L21.5 22.3" stroke="#c8c8c8" stroke-width="2.2" stroke-linecap="round" fill="none"/></svg><span class="lk">EventGraph</span><span class="t g">Function:</span><svg class="mag" width="24" height="26" viewBox="0 0 24 26"><circle cx="10.2" cy="10.2" r="8.1" fill="none" stroke="#c8c8c8" stroke-width="2.1"/><path d="M16 16.2 L21.5 22.3" stroke="#c8c8c8" stroke-width="2.2" stroke-linecap="round" fill="none"/></svg><span class="lk">Execute Ubergraph mainmenu</span></div>
<div style="top:528px" class="row a"><svg class="warn" width="24" height="22" viewBox="0 0 24 22"><path d="M11 3.84 Q12 0.4 13 3.84 L21.2 18.16 Q23 19.9 20.2 19.9 L3.8 19.9 Q1 19.9 2.8 18.16 Z" fill="none" stroke="#ef3535" stroke-width="2.1" stroke-linejoin="round"/><path d="M12 8.2 V14.4" stroke="#ef3535" stroke-width="2.2" fill="none"/><rect x="10.9" y="15.3" width="2.2" height="1.9" fill="#ef3535"/></svg><span class="t">Blueprint Runtime Error: &quot;Accessed None trying to read (real) property PlayerRef in mainmenu_C&quot;.</span><span class="t g">Node:</span><svg class="mag" width="24" height="26" viewBox="0 0 24 26"><circle cx="10.2" cy="10.2" r="8.1" fill="none" stroke="#c8c8c8" stroke-width="2.1"/><path d="M16 16.2 L21.5 22.3" stroke="#c8c8c8" stroke-width="2.2" stroke-linecap="round" fill="none"/></svg><span class="lk">Set mousesensitive</span></div>
<div style="top:561px" class="row"><svg class="warn" width="24" height="22" viewBox="0 0 24 22"><path d="M11 3.84 Q12 0.4 13 3.84 L21.2 18.16 Q23 19.9 20.2 19.9 L3.8 19.9 Q1 19.9 2.8 18.16 Z" fill="none" stroke="#ef3535" stroke-width="2.1" stroke-linejoin="round"/><path d="M12 8.2 V14.4" stroke="#ef3535" stroke-width="2.2" fill="none"/><rect x="10.9" y="15.3" width="2.2" height="1.9" fill="#ef3535"/></svg><span class="t">Blueprint Runtime Error: &quot;Attempted to assign to None&quot;.</span><span class="t g">Node:</span><svg class="mag" width="24" height="26" viewBox="0 0 24 26"><circle cx="10.2" cy="10.2" r="8.1" fill="none" stroke="#c8c8c8" stroke-width="2.1"/><path d="M16 16.2 L21.5 22.3" stroke="#c8c8c8" stroke-width="2.2" stroke-linecap="round" fill="none"/></svg><span class="lk">Set mousesensitive</span><span class="t g">Graph:</span><svg class="mag" width="24" height="26" viewBox="0 0 24 26"><circle cx="10.2" cy="10.2" r="8.1" fill="none" stroke="#c8c8c8" stroke-width="2.1"/><path d="M16 16.2 L21.5 22.3" stroke="#c8c8c8" stroke-width="2.2" stroke-linecap="round" fill="none"/></svg><span class="lk">EventGraph</span><span class="t g">Function:</span><svg class="mag" width="24" height="26" viewBox="0 0 24 26"><circle cx="10.2" cy="10.2" r="8.1" fill="none" stroke="#c8c8c8" stroke-width="2.1"/><path d="M16 16.2 L21.5 22.3" stroke="#c8c8c8" stroke-width="2.2" stroke-linecap="round" fill="none"/></svg><span class="lk">Execute Ubergraph mainmenu</span></div>
<div style="top:594px" class="row a"><svg class="warn" width="24" height="22" viewBox="0 0 24 22"><path d="M11 3.84 Q12 0.4 13 3.84 L21.2 18.16 Q23 19.9 20.2 19.9 L3.8 19.9 Q1 19.9 2.8 18.16 Z" fill="none" stroke="#ef3535" stroke-width="2.1" stroke-linejoin="round"/><path d="M12 8.2 V14.4" stroke="#ef3535" stroke-width="2.2" fill="none"/><rect x="10.9" y="15.3" width="2.2" height="1.9" fill="#ef3535"/></svg><span class="t">Blueprint Runtime Error: &quot;Accessed None trying to read (real) property SettingSave in mainmenu_C&quot;.</span><span class="t g">Node:</span><svg class="mag" width="24" height="26" viewBox="0 0 24 26"><circle cx="10.2" cy="10.2" r="8.1" fill="none" stroke="#c8c8c8" stroke-width="2.1"/><path d="M16 16.2 L21.5 22.3" stroke="#c8c8c8" stroke-width="2.2" stroke-linecap="round" fill="none"/></svg><span class="lk">Set mousesensitive</span></div>
<div style="top:627px" class="row a"><svg class="warn" width="24" height="22" viewBox="0 0 24 22"><path d="M11 3.84 Q12 0.4 13 3.84 L21.2 18.16 Q23 19.9 20.2 19.9 L3.8 19.9 Q1 19.9 2.8 18.16 Z" fill="none" stroke="#ef3535" stroke-width="2.1" stroke-linejoin="round"/><path d="M12 8.2 V14.4" stroke="#ef3535" stroke-width="2.2" fill="none"/><rect x="10.9" y="15.3" width="2.2" height="1.9" fill="#ef3535"/></svg><span class="t">Blueprint Runtime Error: &quot;Accessed None trying to read (real) property SettingSave in mainmenu_C&quot;.</span><span class="t g">Node:</span><svg class="mag" width="24" height="26" viewBox="0 0 24 26"><circle cx="10.2" cy="10.2" r="8.1" fill="none" stroke="#c8c8c8" stroke-width="2.1"/><path d="M16 16.2 L21.5 22.3" stroke="#c8c8c8" stroke-width="2.2" stroke-linecap="round" fill="none"/></svg><span class="lk">Set mousesensitive</span></div>
<div style="top:660px" class="row"><svg class="warn" width="24" height="22" viewBox="0 0 24 22"><path d="M11 3.84 Q12 0.4 13 3.84 L21.2 18.16 Q23 19.9 20.2 19.9 L3.8 19.9 Q1 19.9 2.8 18.16 Z" fill="none" stroke="#ef3535" stroke-width="2.1" stroke-linejoin="round"/><path d="M12 8.2 V14.4" stroke="#ef3535" stroke-width="2.2" fill="none"/><rect x="10.9" y="15.3" width="2.2" height="1.9" fill="#ef3535"/></svg><span class="t">Blueprint Runtime Error: &quot;Attempted to assign to None&quot;.</span><span class="t g">Node:</span><svg class="mag" width="24" height="26" viewBox="0 0 24 26"><circle cx="10.2" cy="10.2" r="8.1" fill="none" stroke="#c8c8c8" stroke-width="2.1"/><path d="M16 16.2 L21.5 22.3" stroke="#c8c8c8" stroke-width="2.2" stroke-linecap="round" fill="none"/></svg><span class="lk">Set mousesensitive</span><span class="t g">Graph:</span><svg class="mag" width="24" height="26" viewBox="0 0 24 26"><circle cx="10.2" cy="10.2" r="8.1" fill="none" stroke="#c8c8c8" stroke-width="2.1"/><path d="M16 16.2 L21.5 22.3" stroke="#c8c8c8" stroke-width="2.2" stroke-linecap="round" fill="none"/></svg><span class="lk">EventGraph</span><span class="t g">Function:</span><svg class="mag" width="24" height="26" viewBox="0 0 24 26"><circle cx="10.2" cy="10.2" r="8.1" fill="none" stroke="#c8c8c8" stroke-width="2.1"/><path d="M16 16.2 L21.5 22.3" stroke="#c8c8c8" stroke-width="2.2" stroke-linecap="round" fill="none"/></svg><span class="lk">Execute Ubergraph mainmenu</span></div>
<div style="top:693px" class="row a"><svg class="warn" width="24" height="22" viewBox="0 0 24 22"><path d="M11 3.84 Q12 0.4 13 3.84 L21.2 18.16 Q23 19.9 20.2 19.9 L3.8 19.9 Q1 19.9 2.8 18.16 Z" fill="none" stroke="#ef3535" stroke-width="2.1" stroke-linejoin="round"/><path d="M12 8.2 V14.4" stroke="#ef3535" stroke-width="2.2" fill="none"/><rect x="10.9" y="15.3" width="2.2" height="1.9" fill="#ef3535"/></svg><span class="t">Blueprint Runtime Error: &quot;Accessed None trying to read (real) property PlayerRef in mainmenu_C&quot;.</span><span class="t g">Node:</span><svg class="mag" width="24" height="26" viewBox="0 0 24 26"><circle cx="10.2" cy="10.2" r="8.1" fill="none" stroke="#c8c8c8" stroke-width="2.1"/><path d="M16 16.2 L21.5 22.3" stroke="#c8c8c8" stroke-width="2.2" stroke-linecap="round" fill="none"/></svg><span class="lk">Set mousesensitive</span></div>
<div style="top:726px" class="row"><svg class="warn" width="24" height="22" viewBox="0 0 24 22"><path d="M11 3.84 Q12 0.4 13 3.84 L21.2 18.16 Q23 19.9 20.2 19.9 L3.8 19.9 Q1 19.9 2.8 18.16 Z" fill="none" stroke="#ef3535" stroke-width="2.1" stroke-linejoin="round"/><path d="M12 8.2 V14.4" stroke="#ef3535" stroke-width="2.2" fill="none"/><rect x="10.9" y="15.3" width="2.2" height="1.9" fill="#ef3535"/></svg><span class="t">Blueprint Runtime Error: &quot;Attempted to assign to None&quot;.</span><span class="t g">Node:</span><svg class="mag" width="24" height="26" viewBox="0 0 24 26"><circle cx="10.2" cy="10.2" r="8.1" fill="none" stroke="#c8c8c8" stroke-width="2.1"/><path d="M16 16.2 L21.5 22.3" stroke="#c8c8c8" stroke-width="2.2" stroke-linecap="round" fill="none"/></svg><span class="lk">Set mousesensitive</span><span class="t g">Graph:</span><svg class="mag" width="24" height="26" viewBox="0 0 24 26"><circle cx="10.2" cy="10.2" r="8.1" fill="none" stroke="#c8c8c8" stroke-width="2.1"/><path d="M16 16.2 L21.5 22.3" stroke="#c8c8c8" stroke-width="2.2" stroke-linecap="round" fill="none"/></svg><span class="lk">EventGraph</span><span class="t g">Function:</span><svg class="mag" width="24" height="26" viewBox="0 0 24 26"><circle cx="10.2" cy="10.2" r="8.1" fill="none" stroke="#c8c8c8" stroke-width="2.1"/><path d="M16 16.2 L21.5 22.3" stroke="#c8c8c8" stroke-width="2.2" stroke-linecap="round" fill="none"/></svg><span class="lk">Execute Ubergraph mainmenu</span></div>
<div style="top:759px" class="row a"><svg class="warn" width="24" height="22" viewBox="0 0 24 22"><path d="M11 3.84 Q12 0.4 13 3.84 L21.2 18.16 Q23 19.9 20.2 19.9 L3.8 19.9 Q1 19.9 2.8 18.16 Z" fill="none" stroke="#ef3535" stroke-width="2.1" stroke-linejoin="round"/><path d="M12 8.2 V14.4" stroke="#ef3535" stroke-width="2.2" fill="none"/><rect x="10.9" y="15.3" width="2.2" height="1.9" fill="#ef3535"/></svg><span class="t">Blueprint Runtime Error: &quot;Accessed None trying to read (real) property SettingSave in mainmenu_C&quot;.</span><span class="t g">Node:</span><svg class="mag" width="24" height="26" viewBox="0 0 24 26"><circle cx="10.2" cy="10.2" r="8.1" fill="none" stroke="#c8c8c8" stroke-width="2.1"/><path d="M16 16.2 L21.5 22.3" stroke="#c8c8c8" stroke-width="2.2" stroke-linecap="round" fill="none"/></svg><span class="lk">Set mousesensitive</span></div>
<div style="top:792px" class="row a"><svg class="warn" width="24" height="22" viewBox="0 0 24 22"><path d="M11 3.84 Q12 0.4 13 3.84 L21.2 18.16 Q23 19.9 20.2 19.9 L3.8 19.9 Q1 19.9 2.8 18.16 Z" fill="none" stroke="#ef3535" stroke-width="2.1" stroke-linejoin="round"/><path d="M12 8.2 V14.4" stroke="#ef3535" stroke-width="2.2" fill="none"/><rect x="10.9" y="15.3" width="2.2" height="1.9" fill="#ef3535"/></svg><span class="t">Blueprint Runtime Error: &quot;Accessed None trying to read (real) property SettingSave in mainmenu_C&quot;.</span><span class="t g">Node:</span><svg class="mag" width="24" height="26" viewBox="0 0 24 26"><circle cx="10.2" cy="10.2" r="8.1" fill="none" stroke="#c8c8c8" stroke-width="2.1"/><path d="M16 16.2 L21.5 22.3" stroke="#c8c8c8" stroke-width="2.2" stroke-linecap="round" fill="none"/></svg><span class="lk">Set mousesensitive</span></div>
</div>
<div class="shr"></div><div class="shb"></div>
</div>
<div class="thumb" style="left:1306px;top:12px;width:12px;height:146px"></div>
<div class="thumb" style="left:12px;top:812px;width:738px;height:12px"></div>
<div class="btn" style="left:19px;width:121px"><span style="display:inline-block;transform-origin:0 50%;transform:scaleX(0.8320);margin-left:16.3px">SHOW</span><svg class="chev" style="left:81px" width="17" height="10" viewBox="0 0 17 10"><path d="M2.2 1.8 L8.5 7.9 L14.8 1.8" fill="none" stroke="#fff" stroke-width="2" stroke-linecap="round" stroke-linejoin="round"/></svg></div>
<div class="btn" style="left:454px;width:433px"><span style="display:inline-block;transform-origin:0 50%;transform:scaleX(0.8749);margin-left:17px">PIE session: main_menu (Aug 12, 2025, 11</span><svg class="chev" style="left:393px" width="17" height="10" viewBox="0 0 17 10"><path d="M2.2 1.8 L8.5 7.9 L14.8 1.8" fill="none" stroke="#fff" stroke-width="2" stroke-linecap="round" stroke-linejoin="round"/></svg></div>
<div class="btn" style="left:1208px;width:115px"><span style="display:inline-block;transform-origin:0 50%;transform:scaleX(0.8401);margin-left:26.2px">CLEAR</span></div>
</div>
</div>
<div id="winb"></div>
<div id="strip"><b></b><i></i></div>
</body></html>
